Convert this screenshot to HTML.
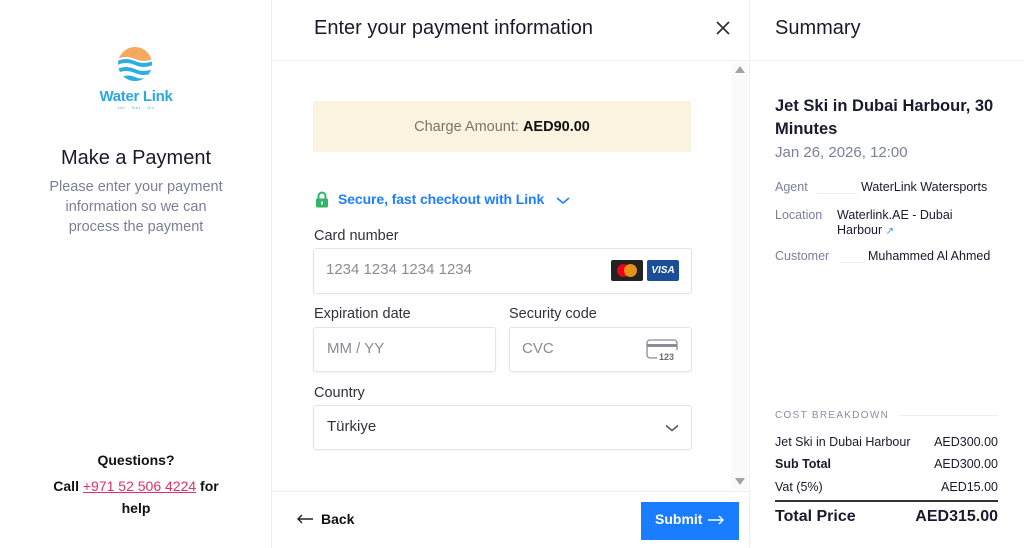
<!DOCTYPE html>
<html><head><meta charset="utf-8"><style>
*{box-sizing:border-box;margin:0;padding:0}
body{width:1024px;height:548px;overflow:hidden;background:#fff;font-family:"Liberation Sans",sans-serif;color:#1a1a2e;position:relative}
.a{position:absolute;white-space:nowrap}
.c{text-align:center}
.in{position:absolute;border:1px solid #e3e3e8;border-radius:3px;background:#fff;box-shadow:0 1px 2px rgba(0,0,0,.04)}
.lbl{font-size:14.5px;color:#30313d}
.ph{font-size:15px;color:#8a8b94}
.g{color:#7a7f99}
.t{margin-top:2px}
</style></head><body>
<div class="a" style="left:271px;top:0;width:1px;height:548px;background:#eceef2"></div>
<div class="a" style="left:749px;top:0;width:1px;height:548px;background:#eceef2"></div>
<div class="a" style="left:272px;top:60px;width:477px;height:1px;background:#f0f0f2"></div>
<div class="a" style="left:272px;top:491px;width:477px;height:1px;background:#eceef2"></div>
<div class="a" style="left:750px;top:60px;width:274px;height:1px;background:#f0f0f2"></div>
<div class="a" style="left:732px;top:62px;width:16px;height:428px;background:#fafafa"></div>
<div class="a" style="left:735px;top:66px;width:0;height:0;border-left:5px solid transparent;border-right:5px solid transparent;border-bottom:7px solid #a3a3a3"></div>
<div class="a" style="left:735px;top:478px;width:0;height:0;border-left:5px solid transparent;border-right:5px solid transparent;border-top:7px solid #a3a3a3"></div>

<svg class="a" style="left:117px;top:46px" width="36" height="36" viewBox="0 0 36 36">
<defs><clipPath id="cc"><circle cx="18" cy="18" r="17"/></clipPath></defs>
<g clip-path="url(#cc)"><rect width="36" height="36" fill="#f5a860"/>
<path d="M0 13 Q9 9 18 13 T36 13 V36 H0Z" fill="#fff"/>
<path d="M0 15 Q9 11 18 15 T36 15 V19 Q27 23 18 19 T0 19Z" fill="#29b0e0"/>
<path d="M0 23 Q9 19 18 23 T36 23 V27 Q27 31 18 27 T0 27Z" fill="#29b0e0"/>
<path d="M4 31 Q12 28 18 31 T32 31 V36 H4Z" fill="#29b0e0"/></g></svg>
<div class="a c" style="left:0;width:272px;top:88px;font-size:15px;font-weight:bold;color:#29a9df;letter-spacing:-0.3px">Water Link</div>
<div class="a c" style="left:0;width:272px;top:105px;font-size:4px;color:#29a9df;letter-spacing:1px">Jet . Set . Go</div>
<div class="a c" style="left:0;width:272px;top:147px;font-size:20px;color:#1a1a2e">Make a Payment</div>
<div class="a c g" style="left:0;width:272px;top:177px;font-size:14.5px;line-height:20px">Please enter your payment<br>information so we can<br>process the payment</div>
<div class="a c" style="left:0;width:272px;top:452px;font-size:14px;font-weight:bold;color:#111">Questions?</div>
<div class="a c" style="left:0;width:272px;top:478px;font-size:14px;font-weight:bold;color:#111">Call <span style="color:#e0306a;text-decoration:underline;font-weight:normal">+971 52 506 4224</span> for</div>
<div class="a c" style="left:0;width:272px;top:500px;font-size:14px;font-weight:bold;color:#111">help</div>

<div class="a" style="left:314px;top:17px;font-size:20px;color:#1a1a2e">Enter your payment information</div>
<svg class="a" style="left:715px;top:20px" width="16" height="16"><path d="M2 2L14 14M14 2L2 14" stroke="#333" stroke-width="1.8"/></svg>
<div class="a c" style="left:313px;top:101px;width:378px;height:51px;background:#faf3e0;line-height:53px;font-size:14.5px;color:#7d7468">Charge Amount: <b style="color:#111">AED90.00</b></div>
<svg class="a" style="left:315px;top:191px" width="14" height="17"><path d="M3.5 8V5a3.5 3.5 0 0 1 7 0v3" stroke="#30b566" stroke-width="2" fill="none"/><rect x="1" y="7.5" width="12" height="9" rx="1.5" fill="#30b566"/><rect x="6" y="10.5" width="2" height="3" fill="#fff"/></svg>
<div class="a" style="left:338px;top:191px;font-size:14px;font-weight:bold;color:#1f7fff;letter-spacing:-0.1px">Secure, fast checkout with Link</div>
<svg class="a" style="left:556px;top:196px" width="14" height="10"><path d="M1 2l6 5 6-5" stroke="#1f7fff" stroke-width="1.6" fill="none"/></svg>
<div class="a lbl" style="left:314px;top:228px">Card number</div>
<div class="in" style="left:313px;top:248px;width:379px;height:46px"></div>
<div class="a ph" style="left:326px;top:261px">1234 1234 1234 1234</div>
<div class="a" style="left:611px;top:260px;width:32px;height:21px;background:#222;border-radius:2px"></div>
<div class="a" style="left:617px;top:264px;width:13px;height:13px;border-radius:50%;background:#eb001b"></div>
<div class="a" style="left:624px;top:264px;width:13px;height:13px;border-radius:50%;background:#f79e1b;opacity:.9"></div>
<div class="a c" style="left:647px;top:260px;width:32px;height:21px;background:#1a4e96;border-radius:2px;color:#fff;font-size:10px;font-weight:bold;font-style:italic;line-height:21px">VISA</div>
<div class="a lbl" style="left:314px;top:306px">Expiration date</div>
<div class="in" style="left:313px;top:327px;width:183px;height:45px"></div>
<div class="a ph" style="left:327px;top:340px">MM / YY</div>
<div class="a lbl" style="left:509px;top:306px">Security code</div>
<div class="in" style="left:509px;top:327px;width:183px;height:45px"></div>
<div class="a ph" style="left:522px;top:340px">CVC</div>
<svg class="a" style="left:646px;top:338px" width="34" height="24"><rect x="1" y="2" width="30" height="18" rx="3" fill="none" stroke="#8a8b94" stroke-width="1.3"/><rect x="1" y="6" width="30" height="3" fill="#8a8b94"/><rect x="11" y="12" width="23" height="12" fill="#fff"/><text x="13" y="22" font-size="9" font-family="Liberation Sans" fill="#6a6b74" font-weight="bold">123</text></svg>
<div class="a lbl" style="left:314px;top:385px">Country</div>
<div class="in" style="left:313px;top:405px;width:379px;height:45px"></div>
<div class="a" style="left:327px;top:418px;font-size:15px;color:#30313d">Türkiye</div>
<svg class="a" style="left:665px;top:424px" width="14" height="9"><path d="M1 1.5l6 5 6-5" stroke="#555" stroke-width="1.5" fill="none"/></svg>
<svg class="a" style="left:296px;top:514px" width="18" height="10"><path d="M17 5H2M6 1L2 5l4 4" stroke="#222" stroke-width="1.4" fill="none"/></svg>
<div class="a" style="left:321px;top:511px;font-size:14px;font-weight:bold;color:#111">Back</div>
<div class="a" style="left:641px;top:502px;width:98px;height:38px;background:#1a7cff"></div>
<div class="a" style="left:655px;top:511px;font-size:14px;font-weight:bold;color:#fff">Submit</div>
<svg class="a" style="left:707px;top:515px" width="18" height="10"><path d="M1 5h15M12 1l4 4-4 4" stroke="#fff" stroke-width="1.4" fill="none"/></svg>

<div class="a" style="left:775px;top:17px;font-size:20px;color:#1a1a2e">Summary</div>
<div class="a" style="left:775px;top:95px;font-size:16.5px;font-weight:bold;line-height:23px;color:#1a1a2e">Jet Ski in Dubai Harbour, 30<br>Minutes</div>
<div class="a g" style="left:775px;top:144px;font-size:15px">Jan 26, 2026, 12:00</div>
<div class="a g" style="left:775px;top:180px;font-size:12.5px">Agent</div>
<div class="a" style="left:817px;top:193px;width:40px;height:1px;background:#eee"></div>
<div class="a" style="left:861px;top:180px;font-size:12.5px;color:#1a1a2e">WaterLink Watersports</div>
<div class="a g" style="left:775px;top:208px;font-size:12.5px">Location</div>
<div class="a" style="left:837px;top:208px;font-size:12.5px;line-height:14.5px;color:#1a1a2e">Waterlink.AE - Dubai<br>Harbour <span style="color:#3a8ee6;font-size:10px">↗</span></div>
<div class="a g" style="left:775px;top:249px;font-size:12.5px">Customer</div>
<div class="a" style="left:840px;top:262px;width:25px;height:1px;background:#eee"></div>
<div class="a" style="left:868px;top:249px;font-size:12.5px;color:#1a1a2e">Muhammed Al Ahmed</div>
<div class="a" style="left:775px;top:410px;font-size:10px;letter-spacing:1.3px;color:#8a8ca4">COST BREAKDOWN</div>
<div class="a" style="left:900px;top:415px;width:98px;height:1px;background:#eceef2"></div>
<div class="a" style="left:775px;top:435px;font-size:12.5px">Jet Ski in Dubai Harbour</div>
<div class="a" style="right:26px;top:435px;font-size:12.5px">AED300.00</div>
<div class="a" style="left:775px;top:457px;font-size:12.5px;font-weight:bold">Sub Total</div>
<div class="a" style="right:26px;top:457px;font-size:12.5px">AED300.00</div>
<div class="a" style="left:775px;top:480px;font-size:12.5px">Vat (5%)</div>
<div class="a" style="right:26px;top:480px;font-size:12.5px">AED15.00</div>
<div class="a" style="left:775px;top:500px;width:223px;height:2px;background:#333"></div>
<div class="a" style="left:775px;top:508px;font-size:16px;font-weight:bold">Total Price</div>
<div class="a" style="right:26px;top:508px;font-size:16px;font-weight:bold">AED315.00</div>
</body></html>
